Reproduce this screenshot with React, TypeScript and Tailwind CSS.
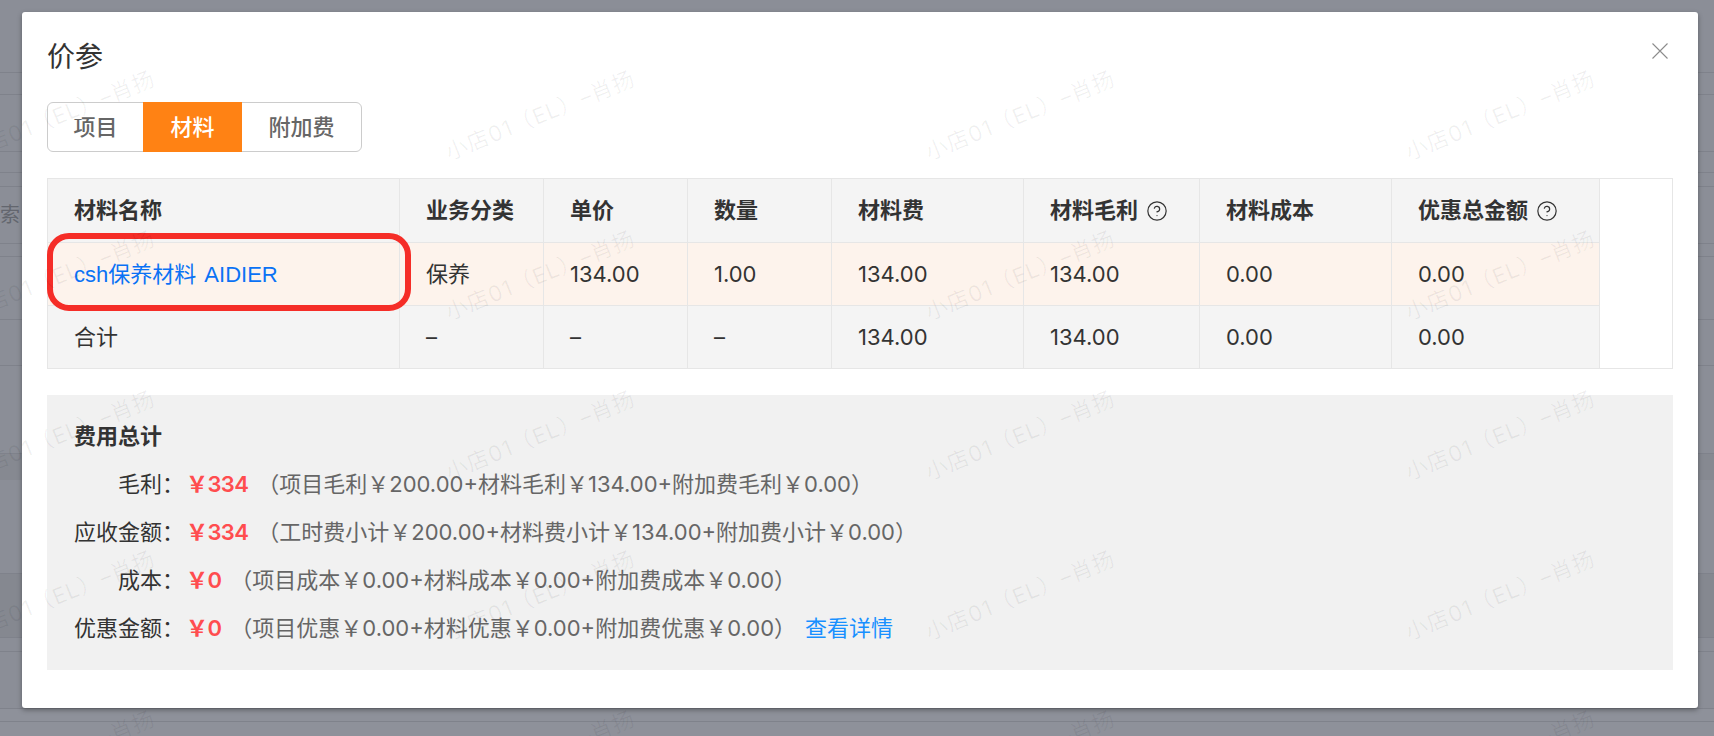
import { CircleHelp } from 'lucide-react'

const PAGE_ROWS = [
  'h-[73px]', 'h-[22px]', 'h-[57px]', 'h-[21px]', 'h-[14px]', 'h-[57px]', 'h-[13px]', 'h-[63px]', 'h-[46px]', 'h-[88px]',
]

const WATERMARKS = Array.from({ length: 20 })

const SUMMARY = [
  { label: '毛利', value: '￥334', note: '（项目毛利￥200.00+材料毛利￥134.00+附加费毛利￥0.00）' },
  { label: '应收金额', value: '￥334', note: '（工时费小计￥200.00+材料费小计￥134.00+附加费小计￥0.00）' },
  { label: '成本', value: '￥0', note: '（项目成本￥0.00+材料成本￥0.00+附加费成本￥0.00）' },
  { label: '优惠金额', value: '￥0', note: '（项目优惠￥0.00+材料优惠￥0.00+附加费优惠￥0.00）', link: '查看详情' },
]

const HEADERS = [
  { title: '材料名称' },
  { title: '业务分类' },
  { title: '单价' },
  { title: '数量' },
  { title: '材料费' },
  { title: '材料毛利', help: true },
  { title: '材料成本' },
  { title: '优惠总金额', help: true },
]

const DETAIL_ROW = ['保养', '134.00', '1.00', '134.00', '134.00', '0.00', '0.00']
const TOTAL_ROW = ['合计', '–', '–', '–', '134.00', '134.00', '0.00', '0.00']

function Cell({ children, className }: { children: React.ReactNode; className: string }) {
  return (
    <div className={`flex items-center gap-[8px] pl-[26px] border-r border-b border-[#e6e6e6] ${className}`}>
      {children}
    </div>
  )
}

export default function App() {
  return (
    <div className="relative w-[1714px] h-[736px] overflow-hidden bg-[#8b8e97] font-['Inter','Noto_Sans_CJK_SC',sans-serif]">
      {/* Page behind the mask */}
      <div className="flex flex-col">
        {PAGE_ROWS.map((h, i) => (
          <div key={i} className={`${h} border-b border-[#7f828b] shrink-0`}>
            {i === 5 && <span className="text-[20px] leading-[57px] text-[#63666e]">索</span>}
          </div>
        ))}
        <div className="h-[26px] bg-[#868991]" />
        <div className="h-[94px] border-b border-[#7f828b]" />
        <div className="h-[64px] bg-[#858890] border-b border-[#7f828b]" />
        <div className="h-[14px] border-b border-[#7f828b]" />
        <div className="h-[56px]" />
        <div className="h-[14px] border-y border-[#7f828b] bg-[#8e919a]" />
        <div className="h-[14px] bg-[#8e919a]" />
      </div>

      {/* Modal */}
      <div className="absolute inset-0 pt-[12px] pl-[22px]">
        <div className="relative w-[1676px] h-[696px] px-[25px] pt-[29px] bg-white rounded-[3px] shadow-[0_2px_5px_rgba(0,0,0,0.35)]">
          <svg className="absolute top-[31px] right-[30px]" width="16" height="16" viewBox="0 0 16 16" fill="none" stroke="#8c8c8c" strokeWidth="1.1">
            <path d="M0.5 0.5L15.5 15.5M15.5 0.5L0.5 15.5" />
          </svg>

          <h1 className="text-[28px] leading-[32px] font-normal text-[#333333]">价参</h1>

          <div className="mt-[29px] inline-flex h-[50px] align-top rounded-[6px] border border-[#cccccc] text-[22px] font-medium text-[#666666]">
            <div className="w-[95px] flex items-center justify-center">项目</div>
            <div className="w-[99px] -my-px flex items-center justify-center bg-[#ff8214] text-white">材料</div>
            <div className="w-[119px] flex items-center justify-center">附加费</div>
          </div>

          {/* Table */}
          <div className="relative mt-[26px] w-[1626px] text-[22px] text-[#333333]">
            <div className="grid grid-cols-[352px_144px_144px_144px_192px_176px_192px_208px_73px] grid-rows-[64px_63px_63px] border-t border-l border-[#e6e6e6]">
              {HEADERS.map((h) => (
                <Cell key={h.title} className="bg-[#f4f4f4] font-semibold">
                  {h.title}
                  {h.help && <CircleHelp size={22} strokeWidth={1.3} className="text-[#333333]" />}
                </Cell>
              ))}
              <div className="row-span-3 border-r border-b border-[#e6e6e6]" />
              <Cell className="bg-[#fdf3ec] text-[#0a72f5] [word-spacing:2px] font-['Liberation_Sans','Noto_Sans_CJK_SC',sans-serif]">csh保养材料 AIDIER</Cell>
              {DETAIL_ROW.map((v, i) => (
                <Cell key={i} className="bg-[#fdf3ec]">{v}</Cell>
              ))}
              {TOTAL_ROW.map((v, i) => (
                <Cell key={i} className="bg-[#f4f4f4]">{v}</Cell>
              ))}
            </div>
            <div className="absolute left-0 top-[55px] w-[364px] h-[78px] rounded-[22px] border-[6px] border-[#f52d27]" />
          </div>

          {/* Cost summary */}
          <div className="mt-[26px] w-[1626px] h-[275px] pt-[17px] pl-[27px] bg-[#f1f1f1] text-[22px] leading-[48px]">
            <div className="font-semibold text-[#333333]">费用总计</div>
            {SUMMARY.map((row) => (
              <div key={row.label} className="flex whitespace-nowrap">
                <div className="w-[110px] mr-[2px] shrink-0 text-right text-[#333333]">{row.label}：</div>
                <div className="font-semibold tracking-[-0.6px] text-[#ff4d4f]">{row.value}</div>
                <div className="ml-[9px] text-[#666666]">{row.note}</div>
                {row.link && <div className="ml-[9px] text-[#1890ff]">{row.link}</div>}
              </div>
            ))}
          </div>
        </div>
      </div>

      {/* Watermark */}
      <div className="absolute inset-0 pointer-events-none">
        <div className="mt-[35px] -ml-[180px] grid grid-cols-[repeat(4,480px)] auto-rows-[160px]">
          {WATERMARKS.map((_, i) => (
            <div key={i} className="flex items-center justify-center">
              <span className="-rotate-[22deg] whitespace-nowrap text-[22px] tracking-[1px] text-black/[0.06]">小店01（EL）–肖扬</span>
            </div>
          ))}
        </div>
      </div>
    </div>
  )
}
